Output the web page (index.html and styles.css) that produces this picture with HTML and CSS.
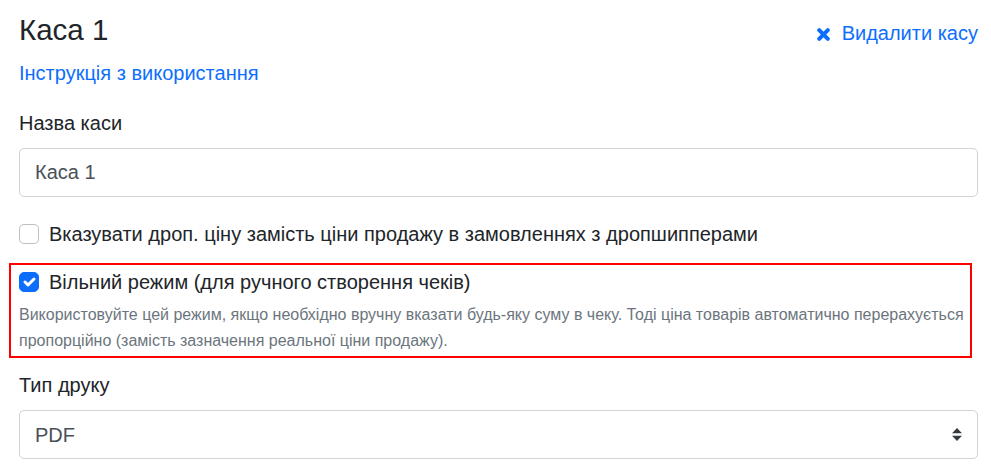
FILE: index.html
```html
<!DOCTYPE html>
<html lang="uk">

    <head>
        <meta charset="UTF-8">
        <title>Каса 1</title>
        <link rel="stylesheet" href="styles.css">
    </head>

    <body>
        <div class="page">
            <div class="head">
                <h3 class="title">Каса 1</h3>
                <a class="del" href="#">
                    <svg class="del-ico" width="13" height="13" viewBox="0 0 13 13">
                        <path d="M2.2 2.2L10.8 10.8M10.8 2.2L2.2 10.8" stroke="currentColor" stroke-width="4" stroke-linecap="round" fill="none"/>
                    </svg>Видалити касу
                </a>
            </div>
            <p class="help"><a href="#">Інструкція з використання</a></p>

            <div class="group">
                <label class="label">Назва каси</label>
                <input class="field" type="text" value="Каса 1">
            </div>

            <div class="check">
                <span class="box"></span>
                <span>Вказувати дроп. ціну замість ціни продажу в замовленнях з дропшипперами</span>
            </div>

            <div class="marked">
                <div class="check">
                    <span class="box on">
                        <svg width="20" height="20" viewBox="0 0 20 20">
                            <path d="M6 10l3 3l6-6" stroke="#fff" stroke-width="3" stroke-linecap="round" stroke-linejoin="round" fill="none"/>
                        </svg>
                    </span>
                    <span>Вільний режим (для ручного створення чеків)</span>
                </div>
                <div class="hint">Використовуйте цей режим, якщо необхідно вручну вказати будь-яку суму в чеку. Тоді ціна товарів автоматично перерахується пропорційно (замість зазначення реальної ціни продажу).</div>
            </div>

            <div class="group">
                <label class="label">Тип друку</label>
                <div class="sel-wrap">
                    <select class="field sel">
                        <option>PDF</option>
                    </select>
                    <svg class="sel-ico" width="10" height="13" viewBox="0 0 4 5" preserveAspectRatio="none">
                        <path d="M2 0L0 2h4zm0 5L0 3h4z" fill="#343a40"/>
                    </svg>
                </div>
            </div>
        </div>
    </body>

</html>
```

FILE: styles.css
```css
* {
    box-sizing: border-box;
}

body {
    margin: 0;
    font-family: "Liberation Sans", Arial, sans-serif;
    font-size: 20px;
    line-height: 1.5;
    color: #212529;
    background: #fff;
}

a {
    color: #0d6efd;
    text-decoration: none;
}

.page {
    padding: 12px 13px 0 19px;
}

.head {
    display: flex;
    justify-content: space-between;
    align-items: baseline;
    margin-bottom: 10px;
}

.title {
    margin: 0;
    font-size: 29.5px;
    font-weight: normal;
    line-height: 1.2;
}

.del {
    display: flex;
    align-items: baseline;
}

.del-ico {
    margin-right: 12px;
    align-self: center;
    position: relative;
    top: 1px;
}

.help {
    margin: 0 0 20px;
}

.group {
    margin-bottom: 22px;
}

.label {
    display: block;
    margin-bottom: 10px;
}

.field {
    display: block;
    width: 100%;
    height: 49px;
    padding: 8.5px 15px;
    font-family: inherit;
    font-size: 20px;
    line-height: 1.5;
    color: #495057;
    background: #fff;
    border: 1px solid #ced4da;
    border-radius: 5px;
    outline: none;
}

.sel-wrap {
    position: relative;
}

.sel {
    appearance: none;
    -webkit-appearance: none;
    padding-right: 40px;
}

.sel-ico {
    position: absolute;
    right: 16px;
    top: 18px;
}

.check {
    display: flex;
    align-items: flex-start;
}

.box {
    flex: none;
    width: 20px;
    height: 20px;
    margin: 5px 10px 0 0;
    border: 1px solid rgba(0, 0, 0, 0.25);
    border-radius: 5px;
    background: #fff;
}

.box.on {
    background: #0d6efd;
    border-color: #0d6efd;
}

.box.on svg {
    display: block;
    margin: -1px;
}

.marked {
    margin: 14px 6px 12px -10px;
    padding: 2px 4px 2px 8px;
    border: 2px solid #f00;
}

.hint {
    margin-top: 5px;
    font-size: 16px;
    line-height: 26px;
    color: #6c757d;
}
```
